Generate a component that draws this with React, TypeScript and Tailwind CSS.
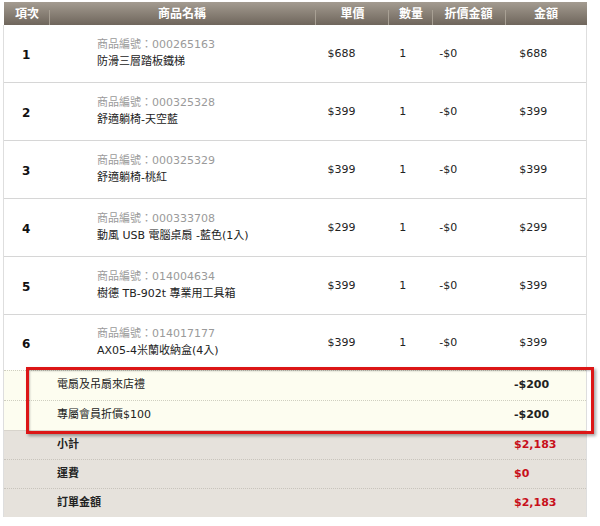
const items = [
  { no: 1, code: "000265163", name: "防滑三層踏板鐵梯", price: "$688", qty: 1, off: "-$0", total: "$688" },
  { no: 2, code: "000325328", name: "舒適躺椅-天空藍", price: "$399", qty: 1, off: "-$0", total: "$399" },
  { no: 3, code: "000325329", name: "舒適躺椅-桃紅", price: "$399", qty: 1, off: "-$0", total: "$399" },
  { no: 4, code: "000333708", name: "動風 USB 電腦桌扇 -藍色(1入)", price: "$299", qty: 1, off: "-$0", total: "$299" },
  { no: 5, code: "014004634", name: "樹德 TB-902t 專業用工具箱", price: "$399", qty: 1, off: "-$0", total: "$399" },
  { no: 6, code: "014017177", name: "AX05-4米蘭收納盒(4入)", price: "$399", qty: 1, off: "-$0", total: "$399" },
];

const discounts = [
  { label: "電扇及吊扇來店禮", value: "-$200" },
  { label: "專屬會員折價$100", value: "-$200" },
];

const summary = [
  { label: "小計", value: "$2,183" },
  { label: "運費", value: "$0" },
  { label: "訂單金額", value: "$2,183" },
];

const Divider = () => <span className="absolute left-0 top-[5px] h-[15px] w-px bg-[#a8a094]" />;

export default function App() {
  return (
    <div
      className="w-[600px] h-[526px] bg-white text-[11px] text-[#222]"
      style={{ fontFamily: '"DejaVu Sans", "Noto Sans CJK TC", sans-serif' }}
    >
      <div className="relative ml-[3px] pt-[2px] w-[584px]">
        {/* Header */}
        <div className="flex h-[23px] items-center text-white font-bold text-[12px] bg-gradient-to-b from-[#a49c91] to-[#6f665c] ml-px">
          <div className="w-[45px] pl-[11px]">項次</div>
          <div className="relative w-[266px] text-center">
            <Divider />
            商品名稱
          </div>
          <div className="relative w-[73px] text-center pl-[2px]">
            <Divider />
            單價
          </div>
          <div className="relative w-[44px] text-center pl-[2px]">
            <Divider />
            數量
          </div>
          <div className="relative w-[73px] text-center">
            <Divider />
            折價金額
          </div>
          <div className="relative w-[82px] text-center">
            <Divider />
            金額
          </div>
        </div>

        {/* Items */}
        <div className="border-x border-[#dedede]">
          {items.map((it, i) => (
            <div
              key={it.no}
              className={`flex items-center ${i === items.length - 1 ? "h-[55px]" : "h-[58px] border-b border-[#d6d6d6]"}`}
            >
              <div className="w-[45px] pl-[18px] pt-[2px] font-bold text-[12px] text-[#111]">{it.no}</div>
              <div className="w-[266px] pl-[48px] leading-[17px] pb-[1px]">
                <div className="text-[#9a9a9a]">商品編號：{it.code}</div>
                <div className="text-[#222]">{it.name}</div>
              </div>
              <div className="w-[73px] pl-[13px] pt-[2px]">{it.price}</div>
              <div className="w-[44px] pl-[12px] pt-[2px]">{it.qty}</div>
              <div className="w-[73px] pl-[8px] pt-[2px]">{it.off}</div>
              <div className="w-[82px] pl-[15px] pt-[2px]">{it.total}</div>
            </div>
          ))}

          {/* Discounts */}
          {discounts.map((d) => (
            <div
              key={d.label}
              className="flex h-[30px] items-center bg-[#fdfdf0] border-t border-dotted border-[#cfcfc0]"
            >
              <div className="flex-1 pl-[53px]">{d.label}</div>
              <div className="w-[82px] pl-[10px] font-bold">{d.value}</div>
            </div>
          ))}

          {/* Summary */}
          {summary.map((s, i) => (
            <div
              key={s.label}
              className={`flex h-[29px] items-center bg-[#e6e2dc] font-bold ${i === 0 ? "border-t border-[#d8d4cc]" : "border-t border-dotted border-[#c8c4bc]"}`}
            >
              <div className="flex-1 pl-[53px] text-[#222]">{s.label}</div>
              <div className="w-[82px] pl-[10px] text-[#c8101a]">{s.value}</div>
            </div>
          ))}
        </div>

        {/* Annotation box */}
        <div className="absolute left-[23px] top-[367px] w-[568px] h-[67px] border-[3px] border-[#dc1616] shadow-[2px_2px_3px_rgba(0,0,0,0.35),inset_1px_1px_2px_rgba(0,0,0,0.25)]" />
      </div>
    </div>
  );
}
